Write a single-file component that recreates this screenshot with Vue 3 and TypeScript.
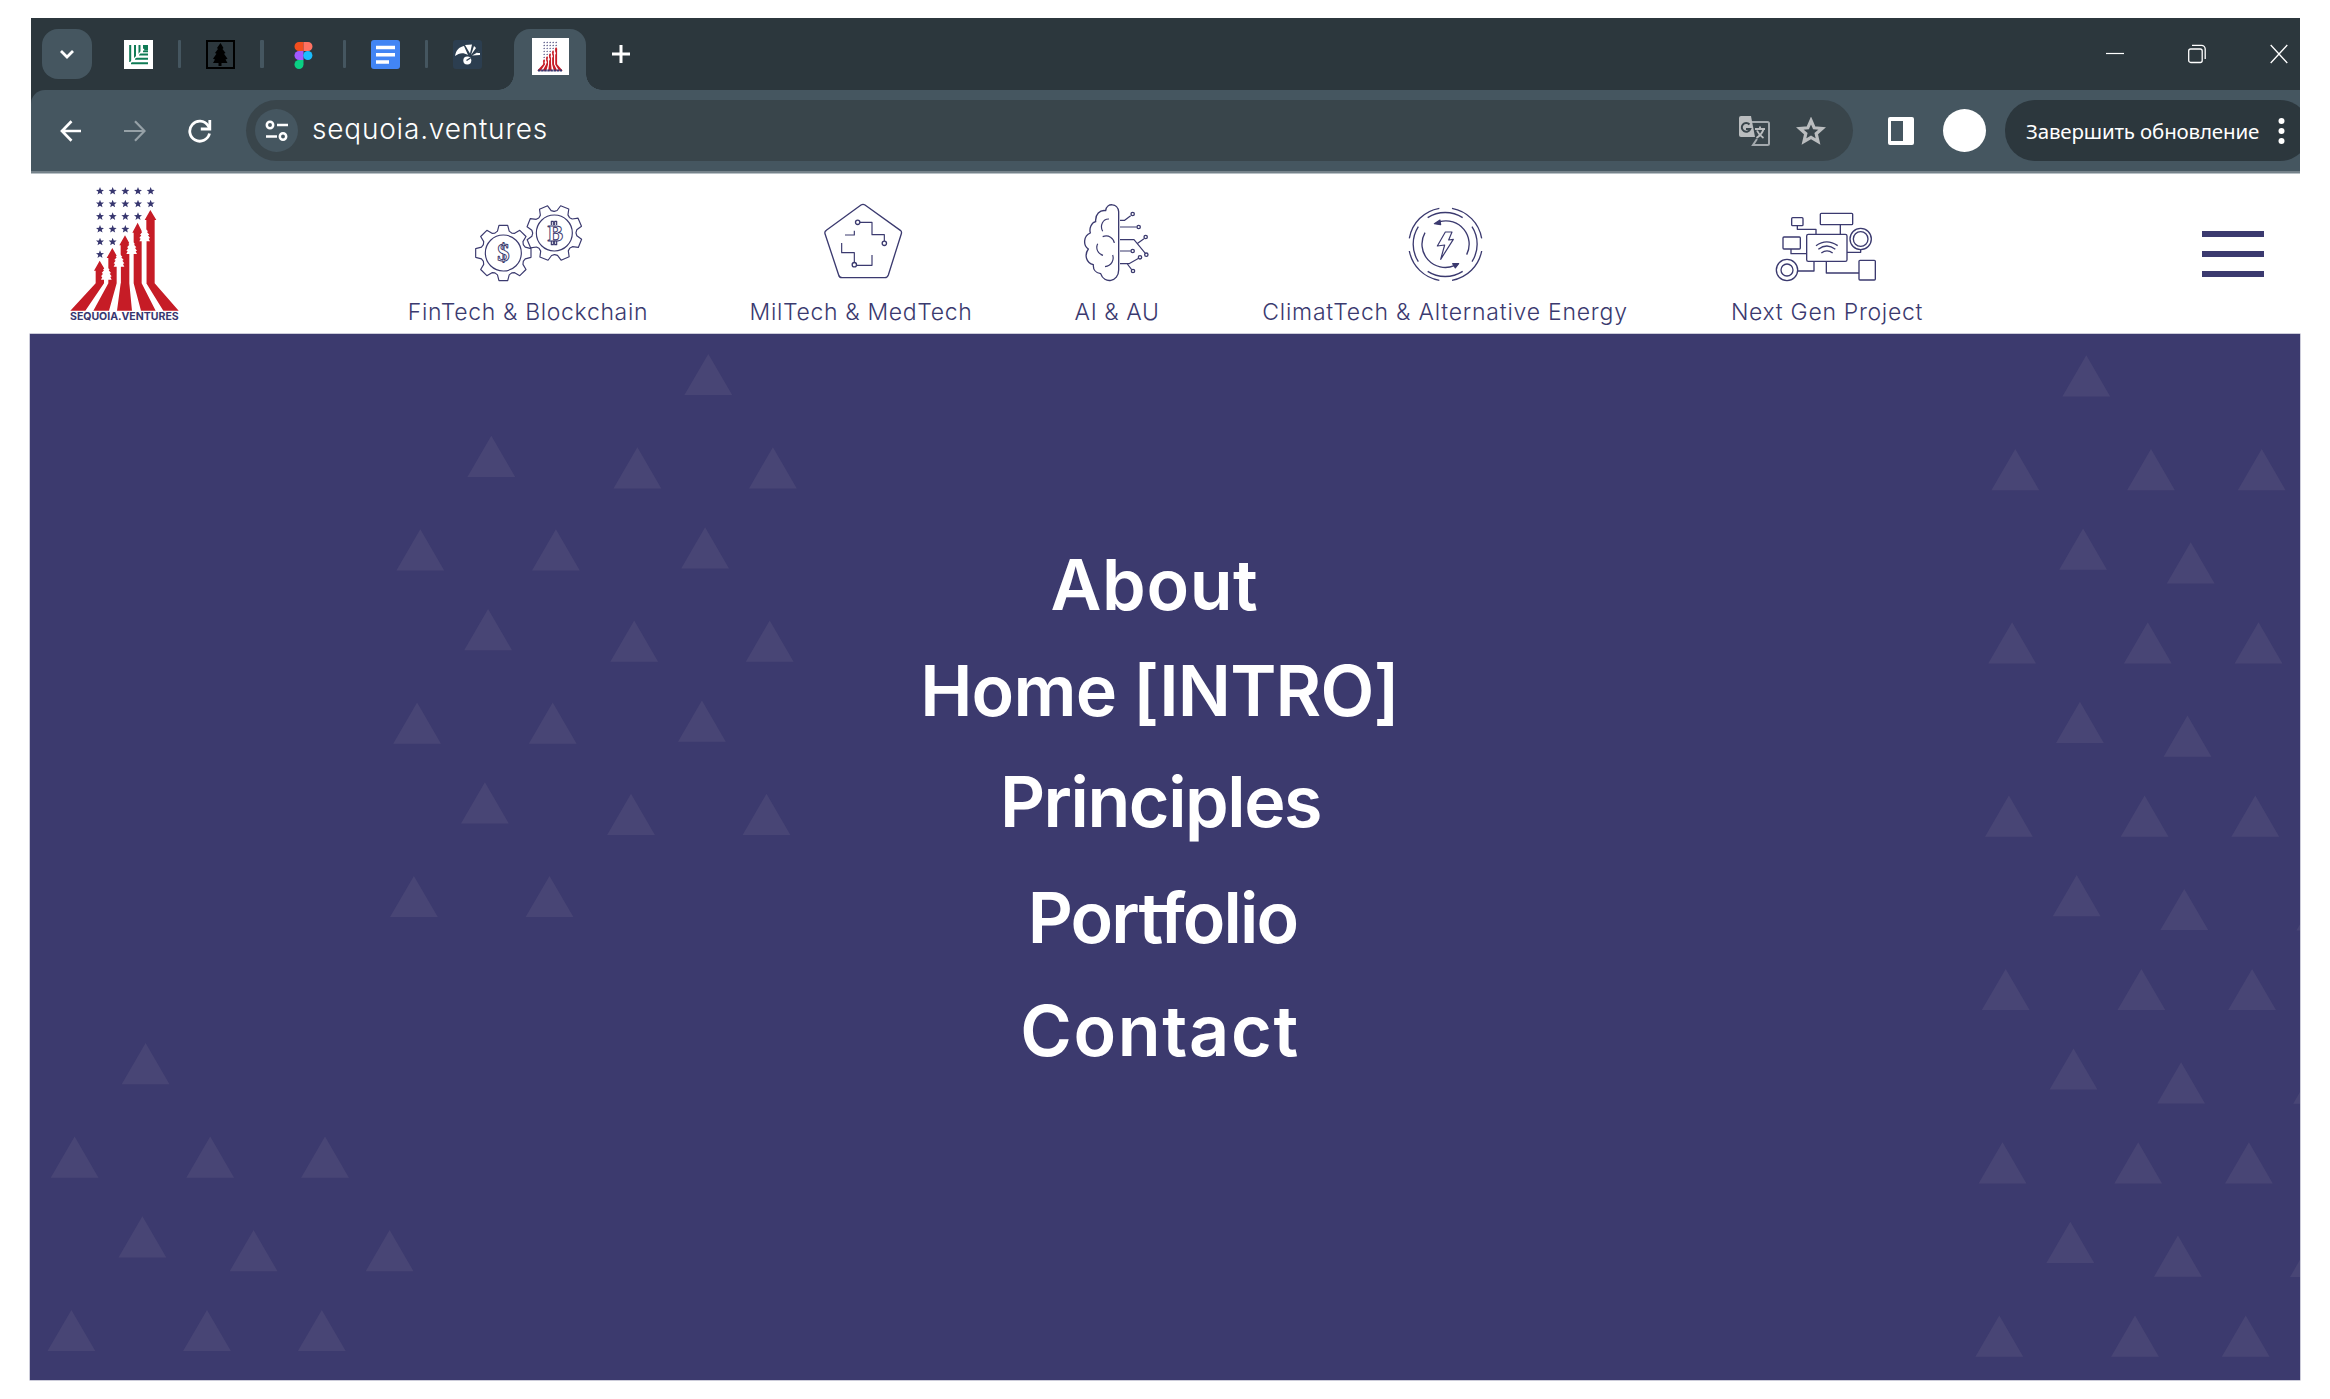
<script setup lang="ts">
interface Sector { label: string; icon: string; box: string; spacing: string; width: string }
interface MenuEntry { label: string; name: string }
interface Family { x: number; y: number; n: number }

const sectors: Sector[] = [
  { label: 'FinTech & Blockchain', icon: 'gears', box: '204 30 360 270', spacing: '0.66px', width: '236px' },
  { label: 'MilTech & MedTech', icon: 'pentagon', box: '212 30 360 270', spacing: '0.66px', width: '219px' },
  { label: 'AI & AU', icon: 'brain', box: '51 30 360 270', spacing: '0.58px', width: '82px' },
  { label: 'ClimatTech & Alternative Energy', icon: 'energy', box: '404 30 360 270', spacing: '0.77px', width: '363px' },
  { label: 'Next Gen Project', icon: 'network', box: '170 30 360 270', spacing: '0.7px', width: '190px' }
]

const menu: MenuEntry[] = [
  { label: 'About', name: 'about' },
  { label: 'Home [INTRO]', name: 'home' },
  { label: 'Principles', name: 'principles' },
  { label: 'Portfolio', name: 'portfolio' },
  { label: 'Contact', name: 'contact' }
]

// Each family is a descending column of triangles that drifts left a little on every step.
const families: Family[] = [
  { x: 708.3, y: 353.9, n: 3 },
  { x: 491.3, y: 435.7, n: 3 },
  { x: 637.4, y: 447.2, n: 3 },
  { x: 772.9, y: 447.2, n: 3 },
  { x: 420.3, y: 529.3, n: 3 },
  { x: 555.9, y: 529.3, n: 3 },
  { x: 145.6, y: 1043, n: 2 },
  { x: 74.6, y: 1136.6, n: 2 },
  { x: 210.2, y: 1136.6, n: 2 },
  { x: 325, y: 1136.6, n: 2 },
  { x: 253.6, y: 1230, n: 1 },
  { x: 389.6, y: 1230, n: 1 },
  { x: 2086.3, y: 355.2, n: 6 },
  { x: 2015.3, y: 449, n: 6 },
  { x: 2151, y: 449, n: 6 },
  { x: 2261.7, y: 449, n: 6 },
  { x: 2190.7, y: 542.3, n: 5 },
  { x: 2320.3, y: 889.3, n: 3 }
]
const triangles = families
  .flatMap(f => Array.from({ length: f.n }, (_, i) => [f.x - 30 - 3.2 * i, f.y - 334 + 173.3 * i]))
  .map(([x, y]) => `M${x.toFixed(1)} ${y.toFixed(1)}l23.9 41.2h-47.8z`)
  .join('')

function gear(cx: number, cy: number, turn: number): string {
  const tooth: [number, number][] = [[-22, 65], [-15, 68], [-9, 84], [9, 84], [15, 68], [22, 65]]
  const pts: string[] = []
  for (let k = 0; k < 8; k++) {
    for (const [deg, r] of tooth) {
      const a = ((k * 45 + turn + deg) * Math.PI) / 180
      pts.push(`${(cx + r * Math.sin(a)).toFixed(1)} ${(cy - r * Math.cos(a)).toFixed(1)}`)
    }
  }
  return `M${pts.join('L')}Z`
}
const gearLeft = gear(310, 189, 0)
const gearRight = gear(463, 129, 22)

const starRows: [number, number][] = [[49, 5], [87, 5], [125, 4], [163, 3], [201, 2], [239, 1]]
const starPath = 'l3.2 8.2 8.8.5-6.8 5.6 2.3 8.5-7.5-4.8-7.5 4.8 2.3-8.5-6.8-5.6 8.8-.5z'
const stars = starRows
  .flatMap(([y, n]) => Array.from({ length: n }, (_, i) => `M${151 + i * 38} ${y - 12}${starPath}`))
  .join('')
const trees = [[170, 275], [208, 236], [246, 198], [285, 160]]
  .map(([x, y]) => `M${x} ${y}l10 10-3 2 7 8-4 2 6 8-4 2 4 8-10 0H${x - 6}h-10l4-8-4-2 6-8-4-2 7-8-3-2z`)
  .join('')
</script>

<template>
  <div class="page">
    <svg class="defs" width="0" height="0">
      <symbol id="mark" viewBox="60 34 330 375">
        <path :d="stars" fill="#37366f" />
        <g fill="#c61c26">
          <path d="M150 258l17 29-4 1v38l-56 82H62l76-82v-38h-5z" />
          <path d="M188 220l17 30-4 1v75l-23 82h-47l45-82v-76h-5z" />
          <path d="M226 182l16 29-3 1v114l8 82h-45l11-82V212h-4z" />
          <path d="M264 144l14 29-2 1v152l42 82h-44l-22-82V174h-4z" />
          <path d="M302 106l18 30h-5v190l72 82h-46l-51-82V136h-5z" />
        </g>
        <path :d="trees" fill="#fff" />
        <path d="M165 310h10v16h-10zM203 272h10v54h-10zM241 234h9v92h-9zM280 198h10v128h-10z" fill="#fff" />
      </symbol>
    </svg>

    <section class="chrome">
      <div class="tabs">
        <div class="chevron">
          <svg width="20" height="20" viewBox="0 0 20 20"><path d="M4 7l6 6 6-6" fill="none" stroke="#fff" stroke-width="2.8" /></svg>
        </div>
        <svg class="fav fav-a" width="29" height="29" viewBox="0 0 29 29">
          <path fill="#fff" d="M0 0h29v29H0z" />
          <path d="M6.2 5v17M11 5v13M15.5 5v9M19 11.3h5M15 14.5h9M11 18.7h13M7 23.2h17" stroke="#0f7b55" stroke-width="2" fill="none" />
          <path d="M19 5h5v5h-5z" fill="#0f7b55" /><path d="M5 24L20 9" stroke="#fff" stroke-width="1.2" />
        </svg>
        <i class="sep" />
        <svg class="fav" width="29" height="29" viewBox="0 0 29 29">
          <path fill="#2c373d" stroke="#000" stroke-width="2" d="M1 1h27v27H1z" />
          <path d="M14.5 3l3 5-1 1 3 4-1.500.8 3.500 5-2 .7 2 3.500h-6V26h-3v-3H7l2-3.500-2-.7 3.500-5L9 13l3-4-1-1z" />
        </svg>
        <i class="sep" />
        <svg class="fav" width="29" height="29" viewBox="0 0 29 29">
          <path fill="#f24e1e" d="M14.500 2H10a4.500 4.500 0 000 9h4.500z" /><path fill="#ff7262" d="M14.500 2H19a4.500 4.500 0 010 9h-4.500z" />
          <path fill="#a259ff" d="M14.500 11H10a4.500 4.500 0 000 9h4.500z" /><circle cx="18.800" cy="15.500" r="4.600" fill="#1abcfe" />
          <path fill="#0acf83" d="M14.500 20H10a4.500 4.500 0 104.500 4.500z" />
        </svg>
        <i class="sep" />
        <svg class="fav" width="29" height="29" viewBox="0 0 29 29">
          <rect width="29" height="29" rx="3" fill="#4285f4" /><path d="M5 7.500h19M5 14.700h19M5 22h13" stroke="#fff" stroke-width="3.500" />
        </svg>
        <i class="sep" />
        <svg class="fav" width="29" height="29" viewBox="0 0 29 29">
          <rect width="29" height="29" rx="3" fill="#2c3e50" />
          <path d="M2 16C3 10 6 7 11 6l4 9C10 12 6 13 2 16zM12 5l7-.5-2 9zM21 6l2 2-5 7zM27 11l-4 2h4v2l-8 .5z" fill="#fff" />
          <circle cx="14.300" cy="20.500" r="4" fill="#fff" /><path d="M13.500 20.500l4-2.500" stroke="#2c3e50" stroke-width="1.400" />
        </svg>
        <div class="active">
          <div class="active-icon">
            <svg width="26" height="31"><use href="#mark" width="26" height="30" /><path d="M1 29.500h24" stroke="#37366f" stroke-width="2" stroke-dasharray="2.500 .6" /></svg>
          </div>
        </div>
        <svg class="plus" width="20" height="20" viewBox="0 0 20 20"><path d="M10 1v18M1 10h18" stroke="#fff" stroke-width="3" /></svg>
        <div class="win">
          <svg width="18" height="20" viewBox="0 0 18 20"><path d="M0 9.500h18" stroke="#fff" stroke-width="1.200" /></svg>
          <svg width="18" height="20" viewBox="0 0 18 20" fill="none" stroke="#fff" stroke-width="1.300"><rect x=".7" y="5" width="13.500" height="13.500" rx="2" /><path d="M4 1.300h9.500a3.700 3.700 0 013.700 3.700v10" /></svg>
          <svg width="18" height="20" viewBox="0 0 18 20"><path d="M.7 1l16.600 18M17.300 1L.7 19" stroke="#fff" stroke-width="1.300" /></svg>
        </div>
      </div>
      <div class="toolbar">
        <div class="navs">
          <svg width="22" height="22" viewBox="0 0 22 22" fill="none" stroke="#fff" stroke-width="2.700"><path d="M21 11H2M11.500 1.300L2 11l9.500 9.700" /></svg>
          <svg width="22" height="22" viewBox="0 0 22 22" fill="none" stroke="#96a1a7" stroke-width="2.200"><path d="M0 11h20M11 1.300l9.500 9.700-9.500 9.700" /></svg>
          <svg width="24" height="24" viewBox="0 0 24 24" fill="none" stroke="#fff" stroke-width="2.800"><path d="M21.500 14.500A10 10 0 1120 6.500l1.500 2.500" /><path d="M21.800 1v9h-9" /></svg>
        </div>
        <div class="omni">
          <div class="tune">
            <svg width="24" height="22" viewBox="0 0 24 22" fill="none" stroke="#fff" stroke-width="2.500"><circle cx="5" cy="5" r="3.200" /><path d="M12 5h11M1 16.500h11" /><circle cx="18" cy="16.500" r="3.200" /></svg>
          </div>
          <span class="url">sequoia.ventures</span>
          <svg class="translate" width="31" height="32" viewBox="0 0 31 32">
            <path d="M2 1h10l4 21H2a2 2 0 01-2-2V3a2 2 0 012-2z" fill="#babdbf" /><path d="M13 7h15.500a1.500 1.500 0 011.500 1.500v20a1.500 1.500 0 01-1.500 1.500H14l4-6" fill="none" stroke="#a3a9ad" stroke-width="2" />
            <path d="M10.500 9.500a4.400 4.400 0 10.800 4.500H7" fill="none" stroke="#39454b" stroke-width="2" />
            <path d="M16 14h10M21 11.500V14m3.500 0c-1 4-4 7-7 9M18 15.500c1.500 3.500 4 6 6.500 7.500" fill="none" stroke="#babdbf" stroke-width="1.900" />
          </svg>
          <svg class="star" width="30" height="28" viewBox="0 0 30 28"><path d="M15 3.500l3.200 7.300 8 .7-6 5.200 1.800 7.800-7-4.200-7 4.200 1.800-7.800-6-5.200 8-.7z" fill="none" stroke="#babdbf" stroke-width="3.200" /></svg>
        </div>
        <svg class="side" width="26" height="28" viewBox="0 0 26 28"><path fill="#fff" fill-rule="evenodd" d="M2 0h22a2 2 0 012 2v24a2 2 0 01-2 2H2a2 2 0 01-2-2V2a2 2 0 012-2zm1 4v20h12V4z" /></svg>
        <i class="avatar" />
        <div class="update">
          <span>Завершить обновление</span>
          <svg width="7" height="28" viewBox="0 0 7 28" fill="#fff"><circle cx="3.500" cy="4" r="3" /><circle cx="3.500" cy="14" r="3" /><circle cx="3.500" cy="24" r="3" /></svg>
        </div>
      </div>
    </section>

    <header class="head">
      <svg class="logo" width="110" height="136" viewBox="61 34 330 408">
        <use href="#mark" x="60" y="34" width="330" height="375" />
        <text x="61" y="436" textLength="326" lengthAdjust="spacingAndGlyphs">SEQUOIA.VENTURES</text>
      </svg>
      <nav class="sectors">
        <a v-for="s in sectors" :key="s.label" class="sector" :style="{ width: s.width }">
          <svg width="120" height="90" :viewBox="s.box" class="line">
            <template v-if="s.icon === 'gears'">
              <path :d="gearLeft" /><circle cx="310" cy="189" r="54" />
              <path :d="gearRight" /><circle cx="463" cy="129" r="54" />
              <text x="310" y="212" class="glyph">$</text>
              <text x="466" y="152" class="glyph bit">B</text>
              <path d="M454 105V94h6v11M464 105V94h6v11M454 153v11h6v-11M464 153v11h6v-11" />
            </template>
            <template v-else-if="s.icon === 'pentagon'">
              <path d="M392 45q6-4 12 0l106 76q5 4 3 10l-39 124q-3 8-10 8H335q-8 0-10-8l-41-124q-2-6 4-10z" stroke-width="4" />
              <path d="M389 97h36v37h37v19M344 135h28v-13M334 159v29h38v29M379 226h46v-31" />
              <g stroke-width="4"><circle cx="382" cy="97" r="6.500" /><circle cx="462" cy="160" r="6.500" /><circle cx="372" cy="224" r="6.500" /></g>
            </template>
            <template v-else-if="s.icon === 'brain'">
              <path d="M236 240V65c-2-26-36-28-39-3-17-3-32 11-30 33-13 3-20 20-16 34-20 8-23 36-6 48-13 18-6 42 15 47-1 14 7 25 22 27 10 32 54 25 54-11z" stroke-width="4" />
              <path d="M207 87c-19-1-28 20-19 37M188 140c18-7 33 5 35 19M173 161c-7 15 1 31 16 35M218 195c5 15-3 32-23 35" />
              <path d="M240 91h14l18-14M240 111h50M240 149h42l34 41M293 160l19-14M240 183h32M240 221h27l29-16M262 222l13 17" />
              <g stroke-width="4"><circle cx="278" cy="72" r="5" /><circle cx="296" cy="111" r="5" /><circle cx="317" cy="141" r="5" /><circle cx="319" cy="194" r="5" /><circle cx="278" cy="183" r="5" /><circle cx="300" cy="202" r="5" /><circle cx="279" cy="243" r="5" /></g>
            </template>
            <template v-else-if="s.icon === 'energy'">
              <g stroke-width="4">
                <path d="M567 55A110 110 0 00477 145M605 55A110 110 0 01694 145M477 183A110 110 0 00567 271M694 183A110 110 0 01605 271" />
                <path d="M532 83A97 97 0 01637 83M665 110A97 97 0 01665 215M637 244A97 97 0 01532 244M504 215A97 97 0 01504 110" />
                <path d="M568 95A70 70 0 01649 194M524 128A70 70 0 00612 227" />
              </g>
              <path d="M552 101l17-11 2 14zM625 221l-18 0 8 13z" fill="#3b3a6f" />
              <path d="M585 126h20l-10 24 14-2-38 60 12-43-22 3z" />
            </template>
            <template v-else>
              <g stroke-width="4">
                <rect x="289" y="133" width="121" height="81" rx="5" /><rect x="330" y="70" width="97" height="34" rx="3" />
                <rect x="244" y="83" width="34" height="24" rx="3" /><rect x="218" y="141" width="52" height="36" rx="3" /><rect x="446" y="211" width="49" height="59" rx="3" />
                <circle cx="451" cy="147" r="32" /><circle cx="451" cy="147" r="22" /><circle cx="230" cy="240" r="32" /><circle cx="230" cy="240" r="18" />
                <path d="M261 107v11h56v15M390 104v29M242 177v14h47M410 187h41v-8M262 243h49v-29M348 214v35h98" />
                <path d="M317 167q32-23 65 0M324 178q26-20 51 0M333 189q17-13 34 0" />
              </g>
            </template>
          </svg>
          <span :style="{ letterSpacing: s.spacing }">{{ s.label }}</span>
        </a>
      </nav>
      <div class="burger"><i /><i /><i /></div>
    </header>

    <main class="panel">
      <svg class="pattern" width="2270" height="1046"><path :d="triangles" fill="#484575" /></svg>
      <ul class="menu">
        <li v-for="m in menu" :key="m.name" :class="m.name">{{ m.label }}</li>
      </ul>
    </main>
  </div>
</template>

<style>
body { margin: 0; background: #fff; }
</style>
<style scoped>
.page { width: 2270px; height: 1381px; padding: 18px 30px 0; font-family: Inter, "Liberation Sans", sans-serif; overflow: hidden; }
.page svg { display: block; flex: none; }
.page .defs { position: absolute; }
.chrome { margin-left: 1px; height: 155px; background: #2c373d; border-bottom: 1px solid #b9c1c6; overflow: hidden; }
.tabs { height: 72px; display: flex; align-items: center; }
.chevron { width: 50px; height: 50px; margin-left: 11px; border-radius: 16px; background: #455660; display: grid; place-items: center; flex: none; }
.fav { margin-right: 25px; }
.fav-a { margin-left: 32px; }
.sep { width: 3.300px; height: 28px; background: #455660; border-radius: 1px; margin-right: 25px; flex: none; }
.active { width: 72px; height: 61px; align-self: flex-end; background: #455660; border-radius: 16px 16px 0 0; margin-left: 7px; display: flex; justify-content: center; position: relative; flex: none; }
.active::before, .active::after { content: ""; position: absolute; bottom: 0; width: 16px; height: 16px; }
.active::before { left: -16px; background: radial-gradient(circle at 0 0, transparent 15.5px, #455660 16px); }
.active::after { right: -16px; background: radial-gradient(circle at 100% 0, transparent 15.5px, #455660 16px); }
.active-icon { width: 37px; height: 37px; margin-top: 9px; background: #fff; display: grid; place-items: center; }
.plus { margin-left: 25px; }
.win { margin-left: auto; margin-right: 12px; display: flex; gap: 64px; }
.toolbar { height: 81px; border-bottom: 2px solid #75828a; background: #455660; border-radius: 14px 0 0 0; display: flex; align-items: center; }
.navs { width: 215px; display: flex; align-items: center; gap: 42px; padding-left: 29px; box-sizing: border-box; flex: none; }
.omni { width: 1607px; height: 61px; border-radius: 31px; background: #39454b; display: flex; align-items: center; flex: none; }
.tune { width: 43px; height: 43px; margin-left: 9px; border-radius: 50%; background: #455660; display: grid; place-items: center; flex: none; }
.url { margin-left: 14px; padding-bottom: 3px; color: #fff; font-size: 28px; font-weight: 300; letter-spacing: .8px; line-height: 40px; }
.translate { margin-left: auto; }
.star { margin: 0 27px 0 26px; }
.side { margin-left: 35px; }
.avatar { width: 43px; height: 43px; border-radius: 50%; background: #fff; margin-left: 29px; flex: none; }
.update { width: 305px; height: 61px; margin-left: 19px; border-radius: 30px; background: #2c373d; color: #fff; display: flex; align-items: center; padding-left: 21px; box-sizing: border-box; flex: none; }
.update span { width: 252px; font: 400 20.5px/30px "Noto Sans", sans-serif; letter-spacing: -.16px; white-space: nowrap; }
.head { height: 160px; display: flex; align-items: flex-start; }
.logo { margin: 12px 0 0 40px; }
.logo text { font: 700 31px Inter, sans-serif; fill: #37366f; }
.sectors { display: flex; gap: 105.500px; margin: 26px 0 0 230px; }
.sector { display: flex; flex-direction: column; align-items: center; color: #3b3a6f; flex: none; }
.sector span { font-size: 23px; font-weight: 300; line-height: 30px; margin-top: 7px; white-space: nowrap; }
.line { fill: none; stroke: #3b3a6f; stroke-width: 3.500; stroke-linejoin: round; }
.glyph { font: 700 74px "Liberation Serif", serif; text-anchor: middle; stroke-width: 2.800; }
.bit { font-size: 70px; }
.burger { width: 62px; margin: 57px 36px 0 auto; display: grid; gap: 14px; }
.burger i { height: 6px; background: #3b3a6f; }
.panel { height: 1046px; background: #3c3a6e; position: relative; box-shadow: 0 0 0 .5px #9a99b5; overflow: hidden; }
.pattern { position: absolute; left: 0; top: 0; }
.menu { position: relative; margin: 0; padding: 210.500px 0 0; list-style: none; display: flex; flex-direction: column; align-items: center; color: #fff; font-size: 70px; font-weight: 600; line-height: 80px; }
.about { letter-spacing: .6px; margin-right: 21px; }
.home { letter-spacing: -.8px; margin: 26px 11px 0 0; }
.principles { letter-spacing: -1.450px; margin: 31px 9px 0 0; }
.portfolio { letter-spacing: -1.900px; margin: 36px 5px 0 0; }
.contact { letter-spacing: 1.700px; margin: 33.500px 10px 0 0; }
</style>
